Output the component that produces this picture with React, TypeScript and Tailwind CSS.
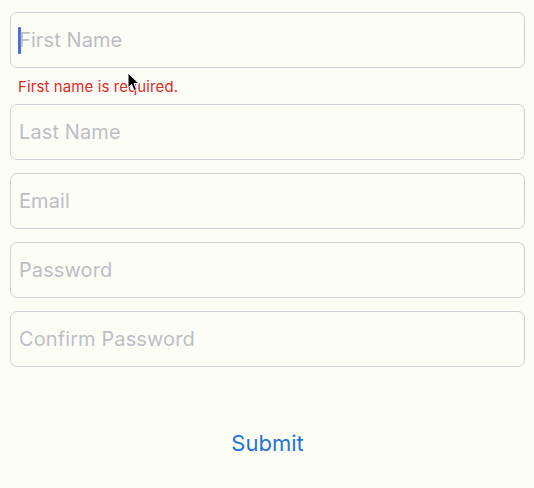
import React from "react";

const fields = ["Last Name", "Email", "Password", "Confirm Password"];

export default function App() {
  return (
    <div
      className="relative w-[534px] h-[488px] bg-[#fdfdf8] overflow-hidden"
      style={{ fontFamily: "Inter, 'Noto Sans', sans-serif" }}
    >
      <div className="flex flex-col pl-[10px] pr-[9px] pt-[12px]">
        <div className="relative h-[56px] rounded-[7px] border border-[#cfcfd6] flex items-center pl-[7px]">
          <div className="w-[3px] h-[27px] bg-[#4a6ee0] rounded-[1px]" />
          <span className="text-[20px] text-[#bdbdc4] -ml-[2px] tracking-[0.1px]">First Name</span>
        </div>
        <div className="h-[36px] flex items-center pl-[8px] pt-[2px]">
          <span className="text-[15px] text-[#dd2a22] tracking-[0.1px]">First name is required.</span>
        </div>
        <div className="flex flex-col gap-[13px]">
          {fields.map((f) => (
            <div
              key={f}
              className="h-[56px] rounded-[7px] border border-[#cfcfd6] flex items-center pl-[8px]"
            >
              <span className="text-[20px] text-[#bdbdc4] tracking-[0.1px]">{f}</span>
            </div>
          ))}
        </div>
        <div className="flex justify-center mt-[60px]">
          <span className="text-[22px] text-[#1f74d6]">Submit</span>
        </div>
      </div>
      <svg
        className="absolute left-[127px] top-[72px]"
        width="13"
        height="20"
        viewBox="0 0 13 20"
      >
        <path
          d="M1 1 L1 16 L4.5 12.5 L7 18.5 L9.5 17.5 L7 11.5 L12 11.5 Z"
          fill="#000"
          stroke="#fff"
          strokeWidth="1"
          strokeLinejoin="round"
        />
      </svg>
    </div>
  );
}
